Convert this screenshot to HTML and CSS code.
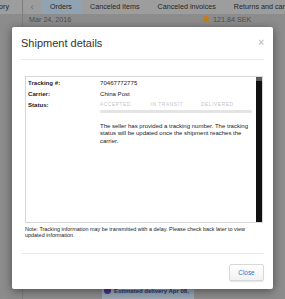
FILE: index.html
```html
<!DOCTYPE html>
<html lang="en">
<head>
    <meta charset="UTF-8">
    <meta name="viewport" content="width=device-width, initial-scale=1.0">
    <title>Shipment details</title>
    <link rel="stylesheet" href="styles.css">
</head>
<body>
    <div class="page">
        <div class="page__side">
            <div class="page__sideTab"><span>History</span></div>
        </div>
        <div class="page__main">
            <div class="tabs">
                <span class="tabs__prev">&lsaquo;</span>
                <span class="tabs__item tabs__item--active">Orders</span>
                <span class="tabs__item">Canceled items</span>
                <span class="tabs__item">Canceled invoices</span>
                <span class="tabs__item">Returns and cancellations</span>
            </div>
            <div class="order">
                <span class="order__date">Mar 24, 2016</span>
                <span class="order__total"><i class="order__icon"></i>121.84 SEK</span>
            </div>
            <div class="delivery">
                <i class="delivery__icon"></i>
                <span class="delivery__text">Estimated delivery Apr 08, 2016</span>
            </div>
        </div>
    </div>

    <div class="modal">
        <div class="modal__header">
            <h3 class="modal__title">Shipment details</h3>
            <span class="modal__close">&times;</span>
        </div>
        <div class="modal__body">
            <div class="tracking">
                <div class="tracking__content">
                    <div class="tracking__row">
                        <span class="tracking__label">Tracking #:</span>
                        <span>70467772775</span>
                    </div>
                    <div class="tracking__row">
                        <span class="tracking__label">Carrier:</span>
                        <span>China Post</span>
                    </div>
                    <div class="tracking__row">
                        <span class="tracking__label">Status:</span>
                        <div class="tracking__status">
                            <div class="tracking__steps">
                                <span>Accepted</span>
                                <span>In transit</span>
                                <span>Delivered</span>
                            </div>
                            <div class="tracking__bar"></div>
                            <p class="tracking__text">The seller has provided a tracking number. The tracking status will be updated once the shipment reaches the carrier.</p>
                        </div>
                    </div>
                </div>
                <div class="tracking__scroll"></div>
            </div>
            <p class="modal__note">Note: Tracking information may be transmitted with a delay. Please check back later to view updated information.</p>
        </div>
        <div class="modal__footer">
            <button class="modal__button">Close</button>
        </div>
    </div>
</body>
</html>
```

FILE: styles.css
```css
:root {
    --page-bg: #8c8c8c;
    --bar-bg: #9d9d9d;
    --active-tab: #8fa3b2;
    --page-text: #262626;
    --line: #e8e8e8;
    --link: #3b6fc2;
}

* {
    margin: 0;
    padding: 0;
    box-sizing: border-box;
}

body {
    position: relative;
    width: 285px;
    height: 299px;
    overflow: hidden;
    background: var(--page-bg);
    font-family: "Liberation Sans", Arial, sans-serif;
}

/* dimmed page behind the dialog */

.page {
    display: flex;
    height: 100%;
}

.page__side {
    width: 23px;
    border-right: 1px solid #7e7e7e;
}

.page__sideTab {
    display: flex;
    justify-content: flex-end;
    height: 14px;
    padding-right: 13px;
    overflow: hidden;
    background: var(--bar-bg);
    color: var(--page-text);
    font-size: 7.2px;
    line-height: 14px;
    white-space: nowrap;
}

.page__main {
    flex: 1;
    display: flex;
    flex-direction: column;
}

.tabs {
    display: flex;
    height: 14px;
    background: var(--bar-bg);
    color: var(--page-text);
    font-size: 7.2px;
    line-height: 14px;
    white-space: nowrap;
    overflow: hidden;
}

.tabs__prev {
    width: 18px;
    text-align: center;
    color: #666;
    font-size: 9px;
}

.tabs__item {
    padding: 0 9px;
}

.tabs__item--active {
    background: var(--active-tab);
}

.order {
    display: flex;
    align-items: center;
    height: 8px;
    margin-top: 1px;
    padding-left: 6px;
    color: #4c4c4c;
    font-size: 7.2px;
}

.order__date {
    width: 174px;
}

.order__total {
    display: flex;
    align-items: center;
}

.order__icon {
    width: 6px;
    height: 6px;
    margin-right: 4px;
    border-radius: 50%;
    background: #c47c1c;
}

.delivery {
    display: flex;
    align-items: flex-start;
    flex: none;
    width: 92px;
    height: 17px;
    margin: auto 0 0 79px;
    padding: 2.5px 0 0 2px;
    overflow: hidden;
    background: #97a6b5;
}

.delivery__icon {
    flex: none;
    width: 7px;
    height: 7px;
    margin: 2.5px 3px 0 0;
    border-radius: 50%;
    background: #4e3384;
}

.delivery__text {
    color: #27356a;
    font-size: 6px;
    font-weight: bold;
    line-height: 12px;
}

/* dialog */

.modal {
    position: absolute;
    top: 27px;
    left: 12px;
    display: flex;
    flex-direction: column;
    width: 261px;
    height: 262px;
    border-radius: 2px;
    background: #fff;
    box-shadow: 0 2px 10px rgba(0, 0, 0, 0.45);
}

.modal__header {
    display: flex;
    align-items: center;
    justify-content: space-between;
    height: 33px;
    margin: 0 9px;
    border-bottom: 1px solid var(--line);
}

.modal__title {
    color: #333;
    font-size: 11px;
    font-weight: normal;
}

.modal__close {
    color: #c4c4c4;
    font-size: 10px;
    font-weight: bold;
    line-height: 1;
}

.modal__body {
    padding: 16px 10px 0 13px;
}

.tracking {
    display: flex;
    height: 147px;
    border: 1px solid #d6d6d6;
}

.tracking__content {
    flex: 1;
    padding: 0 2px;
    color: #222;
    font-size: 6.1px;
}

.tracking__row {
    display: grid;
    grid-template-columns: 72px 1fr;
    line-height: 11px;
}

.tracking__label {
    font-weight: bold;
}

.tracking__steps {
    display: flex;
    color: #c4c4c4;
    font-size: 4.8px;
    letter-spacing: 0.6px;
    text-transform: uppercase;
}

.tracking__steps span {
    width: 50.5px;
}

.tracking__bar {
    width: 152px;
    height: 3px;
    border-radius: 2px;
    background: #e4e4e4;
}

.tracking__text {
    width: 152px;
    margin-top: 10px;
    font-size: 6px;
    line-height: 7.4px;
}

.tracking__scroll {
    width: 6px;
    background: #111;
}

.tracking__scroll::before {
    content: "";
    display: block;
    height: 4px;
    background: #5a5a5a;
}

.modal__note {
    margin-top: 3px;
    color: #222;
    font-size: 5.45px;
    line-height: 6.4px;
}

.modal__footer {
    display: flex;
    justify-content: flex-end;
    margin: 14px 9px 0;
    padding-top: 10px;
    border-top: 1px solid var(--line);
}

.modal__button {
    width: 35px;
    height: 17px;
    border: 1px solid #d8d8d8;
    border-radius: 2px;
    background: linear-gradient(#fff, #f2f2f2);
    box-shadow: 0 1px 1px rgba(0, 0, 0, 0.1);
    color: var(--link);
    font-family: inherit;
    font-size: 6.4px;
}
```
